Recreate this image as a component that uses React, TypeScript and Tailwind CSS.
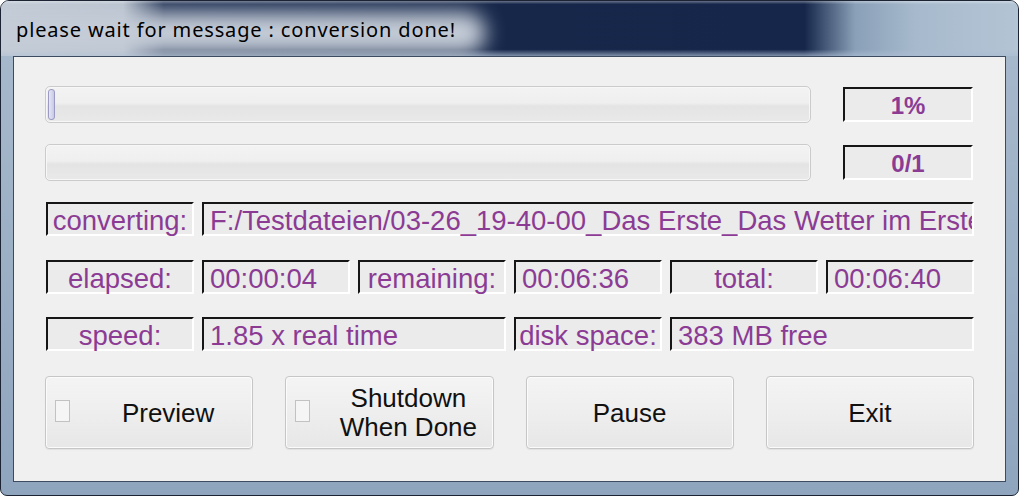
import React from "react";

const fieldBase =
  "h-[34px] bg-[#ebebeb] border-t-2 border-l-2 border-t-[#161616] border-l-[#161616] border-r-2 border-b-2 border-r-white border-b-white flex items-center overflow-x-clip whitespace-nowrap text-[27.5px] leading-none text-[#8b3b94] pt-[4px]";
const labelCls = fieldBase + " justify-center";
const valueCls = fieldBase + " pl-[6px]";

function ProgressBar({ indicator }: { indicator?: boolean }) {
  return (
    <div className="w-[766px] h-[37px] rounded-[5px] border border-[#cbcbcb] shadow-[inset_0_0_0_1px_#f7f7f7] bg-[linear-gradient(180deg,#f3f3f3_0%,#efefef_45%,#e4e4e4_55%,#e9e9e9_100%)] flex items-center pl-[2px]">
      {indicator && (
        <div className="w-[7px] h-[31px] rounded-[3px] border border-[#9a9ac2] bg-[linear-gradient(90deg,#e6e6f6,#c9c9e6)]" />
      )}
    </div>
  );
}

function Counter({ text }: { text: string }) {
  return (
    <div className="w-[130px] h-[35px] bg-[#ebebeb] border-t-2 border-l-2 border-t-[#161616] border-l-[#161616] border-r-2 border-b-2 border-r-white border-b-white flex items-center justify-center text-[24px] font-bold leading-none text-[#8b3b94] pt-[3px]">
      {text}
    </div>
  );
}

function Btn({ children, check }: { children: React.ReactNode; check?: boolean }) {
  return (
    <div
      className={
        "relative h-[73px] rounded-[4px] border border-[#c6c6c6] shadow-[inset_0_0_0_1px_#fbfbfb,0_1px_1px_rgba(0,0,0,0.06)] bg-[linear-gradient(180deg,#f4f4f4_0%,#eeeeee_50%,#e7e7e7_100%)] flex items-center justify-center text-[26px] leading-[29px] text-[#111] text-center pt-[1px] " +
        (check ? "pl-[38px]" : "")
      }
    >
      {check && (
        <div className="absolute left-[9px] top-[23px] w-[15px] h-[22px] border border-[#c2c2c2] bg-[#f5f5f5]" />
      )}
      <div>{children}</div>
    </div>
  );
}

export default function App() {
  return (
    <div className="w-[1020px] h-[496px] bg-white font-['Liberation_Sans',Arial,sans-serif]">
      <div className="w-[1019px] h-[496px] rounded-t-[9px] rounded-b-[7px] border border-[#1c2433] overflow-hidden flex flex-col bg-[linear-gradient(180deg,#a9bbcd,#8fa5be)]">
        {/* title bar */}
        <div className="relative h-[55px] shrink-0 overflow-hidden bg-[image:linear-gradient(180deg,rgba(255,255,255,0.35)_0%,rgba(255,255,255,0)_6%,rgba(255,255,255,0)_88%,rgba(170,188,210,0.7)_100%),linear-gradient(90deg,#c3cbd6_0%,#b9c3cf_12%,#1e2f52_16%,#16274a_50%,#15264a_79%,#8aa0b8_84%,#a7bacd_90%,#b3c4d4_100%)]">
          <div className="absolute left-[-30px] top-[11px] w-[515px] h-[42px] rounded-[21px] bg-[#c4ccd7] blur-[10px]" />
          <div className="relative flex items-center h-full pl-[15px] pt-[3px]">
            <span className="font-['Noto_Sans',sans-serif] text-[20px] tracking-[0.85px] text-black leading-none">
              please wait for message : conversion done!
            </span>
          </div>
        </div>
        {/* body */}
        <div className="flex-1 flex px-[12px] pb-[13px]">
          <div className="flex-1 border border-[#3d4b60] bg-[#f0f0f0] pl-[31px] pt-[29px] flex flex-col">
            <div className="flex items-center gap-[32px] w-[928px]">
              <ProgressBar indicator />
              <Counter text="1%" />
            </div>
            <div className="flex items-center gap-[32px] w-[928px] mt-[21px]">
              <ProgressBar />
              <Counter text="0/1" />
            </div>
            <div className="grid grid-cols-6 gap-x-[8px] w-[929px] mt-[21px] pl-[1px]">
              <div className={labelCls}>converting:</div>
              <div className={valueCls + " col-span-5"}>
                F:/Testdateien/03-26_19-40-00_Das Erste_Das Wetter im Erste
              </div>
            </div>
            <div className="grid grid-cols-6 gap-x-[8px] w-[929px] mt-[24px] pl-[1px]">
              <div className={labelCls}>elapsed:</div>
              <div className={valueCls}>00:00:04</div>
              <div className={labelCls}>remaining:</div>
              <div className={valueCls}>00:06:36</div>
              <div className={labelCls}>total:</div>
              <div className={valueCls}>00:06:40</div>
            </div>
            <div className="grid grid-cols-6 gap-x-[8px] w-[929px] mt-[23px] pl-[1px]">
              <div className={labelCls}>speed:</div>
              <div className={valueCls + " col-span-2"}>1.85 x real time</div>
              <div className={labelCls}>disk space:</div>
              <div className={valueCls + " col-span-2"}>383 MB free</div>
            </div>
            <div className="grid grid-cols-4 gap-x-[32px] w-[929px] mt-[25px]">
              <Btn check>Preview</Btn>
              <Btn check>
                Shutdown
                <br />
                When Done
              </Btn>
              <Btn>Pause</Btn>
              <Btn>Exit</Btn>
            </div>
          </div>
        </div>
      </div>
    </div>
  );
}
